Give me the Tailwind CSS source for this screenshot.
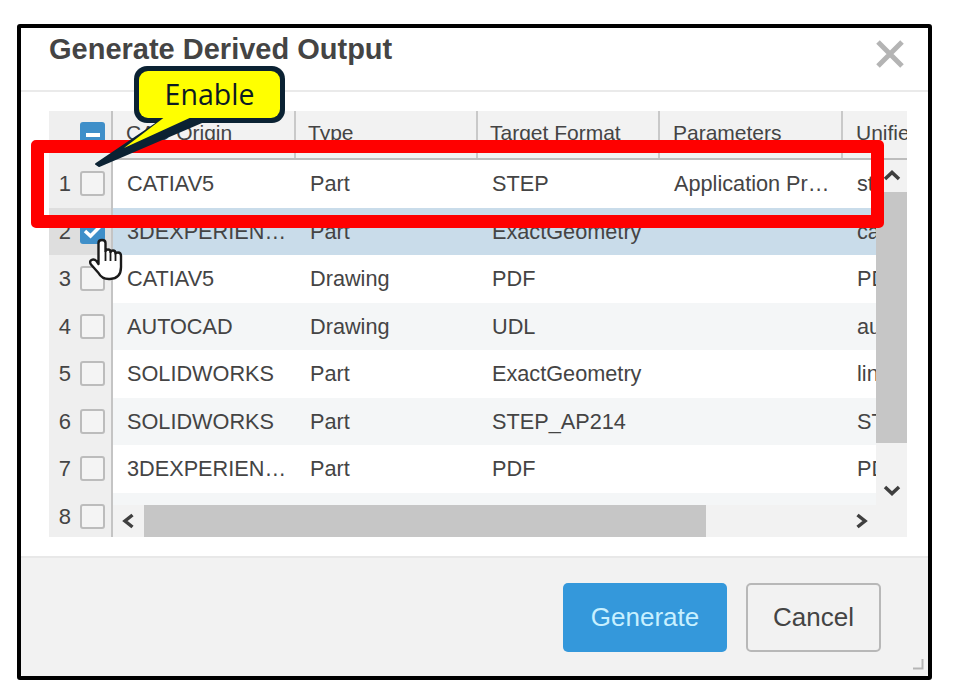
<!DOCTYPE html>
<html lang="en">

<head>
  <meta charset="UTF-8" />
  <title>Generate Derived Output</title>
  <script src="https://cdn.jsdelivr.net/npm/@tailwindcss/browser@4"></script>
</head>

<body class="bg-white font-['Liberation_Sans',Arial,sans-serif] text-[#444]">
  <div class="relative h-[695px] w-[960px] overflow-hidden pt-[24px] pl-[17px]">
    <!-- dialog -->
    <div class="flex h-[656px] w-[915px] flex-col rounded-[3px] border-4 border-black bg-white">
      <div class="relative h-[64px] shrink-0 border-b-2 border-[#eaeaea] pl-[28px] pt-[3px]">
        <h1 class="text-[29px] font-bold leading-[36px] text-[#444]">Generate Derived Output</h1>
        <svg class="absolute right-[23px] top-[11px]" width="30" height="30" viewBox="0 0 30 30">
          <path d="M3 3 L27 27 M27 3 L3 27" stroke="#b4b4b4" stroke-width="5" fill="none" />
        </svg>
      </div>

      <div class="h-[464px] shrink-0 pl-[28px] pr-[21px] pt-[19px]">
        <div class="flex h-[426px] overflow-hidden bg-[#f2f2f2]">
          <!-- row numbers and checkboxes -->
          <div class="h-full w-[64px] shrink-0 overflow-hidden border-r-2 border-[#c4c4c4] bg-[#efefef]">
            <div class="flex h-[49px] items-start pl-[31px] pt-[11px]">
              <div class="flex h-[26px] w-[25px] items-center justify-center rounded-[3px] bg-[#3f8fc9]">
                <div class="h-[4px] w-[14px] bg-white"></div>
              </div>
            </div>
            <div class="flex h-[47.5px] items-center justify-end gap-[9px] pr-[6px] text-[22px]"><span>1</span><span class="h-[25px] w-[25px] rounded-[3px] border-2 border-[#bcbcbc] bg-[#f4f4f4]"></span></div>
            <div class="flex h-[47.5px] items-center justify-end gap-[9px] bg-[#dedede] pr-[6px] text-[22px]"><span>2</span>
              <span class="flex h-[25px] w-[25px] items-center justify-center rounded-[3px] bg-[#3f8fc9]">
                <svg width="19" height="15" viewBox="0 0 19 15"><path d="M2 7 L7.5 12 L17 2.5" stroke="#fff" stroke-width="3.5" fill="none" /></svg>
              </span>
            </div>
            <div class="flex h-[47.5px] items-center justify-end gap-[9px] pr-[6px] text-[22px]"><span>3</span><span class="h-[25px] w-[25px] rounded-[3px] border-2 border-[#bcbcbc] bg-[#f4f4f4]"></span></div>
            <div class="flex h-[47.5px] items-center justify-end gap-[9px] pr-[6px] text-[22px]"><span>4</span><span class="h-[25px] w-[25px] rounded-[3px] border-2 border-[#bcbcbc] bg-[#f4f4f4]"></span></div>
            <div class="flex h-[47.5px] items-center justify-end gap-[9px] pr-[6px] text-[22px]"><span>5</span><span class="h-[25px] w-[25px] rounded-[3px] border-2 border-[#bcbcbc] bg-[#f4f4f4]"></span></div>
            <div class="flex h-[47.5px] items-center justify-end gap-[9px] pr-[6px] text-[22px]"><span>6</span><span class="h-[25px] w-[25px] rounded-[3px] border-2 border-[#bcbcbc] bg-[#f4f4f4]"></span></div>
            <div class="flex h-[47.5px] items-center justify-end gap-[9px] pr-[6px] text-[22px]"><span>7</span><span class="h-[25px] w-[25px] rounded-[3px] border-2 border-[#bcbcbc] bg-[#f4f4f4]"></span></div>
            <div class="flex h-[47.5px] items-center justify-end gap-[9px] pr-[6px] text-[22px]"><span>8</span><span class="h-[25px] w-[25px] rounded-[3px] border-2 border-[#bcbcbc] bg-[#f4f4f4]"></span></div>
          </div>

          <div class="flex min-w-0 flex-1 flex-col">
            <!-- header -->
            <div class="grid h-[49px] shrink-0 grid-cols-[183px_182px_182px_183px_1fr] overflow-hidden border-b-2 border-[#bdbdbd] text-[21px] leading-[44px]">
              <div class="border-r-2 border-[#c9c9c9] pl-[13px]">CAD Origin</div>
              <div class="border-r-2 border-[#c9c9c9] pl-[12px]">Type</div>
              <div class="border-r-2 border-[#c9c9c9] pl-[12px]">Target Format</div>
              <div class="border-r-2 border-[#c9c9c9] pl-[13px]">Parameters</div>
              <div class="whitespace-nowrap pl-[13px]">Unified</div>
            </div>

            <div class="flex min-h-0 flex-1">
              <!-- rows -->
              <div class="min-w-0 flex-1 overflow-hidden bg-[#f4f6f7] text-[21.7px] leading-[47.5px]">
                <div class="grid h-[47.5px] grid-cols-[182px_182px_182px_183px_100px] whitespace-nowrap bg-white">
                  <div class="pl-[14px]">CATIAV5</div><div class="pl-[15px]">Part</div><div class="pl-[15px]">STEP</div><div class="pl-[15px]">Application Pr…</div><div class="pl-[15px]">step</div>
                </div>
                <div class="grid h-[47.5px] grid-cols-[182px_182px_182px_183px_100px] whitespace-nowrap bg-[#c9dcea]">
                  <div class="pl-[14px]">3DEXPERIEN…</div><div class="pl-[15px]">Part</div><div class="pl-[15px]">ExactGeometry</div><div class="pl-[15px]"></div><div class="pl-[15px]">catia</div>
                </div>
                <div class="grid h-[47.5px] grid-cols-[182px_182px_182px_183px_100px] whitespace-nowrap bg-white">
                  <div class="pl-[14px]">CATIAV5</div><div class="pl-[15px]">Drawing</div><div class="pl-[15px]">PDF</div><div class="pl-[15px]"></div><div class="pl-[15px]">PDF</div>
                </div>
                <div class="grid h-[47.5px] grid-cols-[182px_182px_182px_183px_100px] whitespace-nowrap bg-[#f4f6f7]">
                  <div class="pl-[14px]">AUTOCAD</div><div class="pl-[15px]">Drawing</div><div class="pl-[15px]">UDL</div><div class="pl-[15px]"></div><div class="pl-[15px]">autocad</div>
                </div>
                <div class="grid h-[47.5px] grid-cols-[182px_182px_182px_183px_100px] whitespace-nowrap bg-white">
                  <div class="pl-[14px]">SOLIDWORKS</div><div class="pl-[15px]">Part</div><div class="pl-[15px]">ExactGeometry</div><div class="pl-[15px]"></div><div class="pl-[15px]">link</div>
                </div>
                <div class="grid h-[47.5px] grid-cols-[182px_182px_182px_183px_100px] whitespace-nowrap bg-[#f4f6f7]">
                  <div class="pl-[14px]">SOLIDWORKS</div><div class="pl-[15px]">Part</div><div class="pl-[15px]">STEP_AP214</div><div class="pl-[15px]"></div><div class="pl-[15px]">STEP</div>
                </div>
                <div class="grid h-[47.5px] grid-cols-[182px_182px_182px_183px_100px] whitespace-nowrap bg-white">
                  <div class="pl-[14px]">3DEXPERIEN…</div><div class="pl-[15px]">Part</div><div class="pl-[15px]">PDF</div><div class="pl-[15px]"></div><div class="pl-[15px]">PDF</div>
                </div>
              </div>

              <!-- vertical scrollbar -->
              <div class="flex w-[31px] shrink-0 flex-col">
                <div class="flex h-[32px] items-start justify-center pt-[10px]">
                  <svg width="18" height="11" viewBox="0 0 18 11"><path d="M2 9 L9 2.5 L16 9" stroke="#3f3f3f" stroke-width="3.5" fill="none" /></svg>
                </div>
                <div class="h-[251px] bg-[#c6c6c6]"></div>
                <div class="flex flex-1 items-end justify-center pb-[9px]">
                  <svg width="18" height="11" viewBox="0 0 18 11"><path d="M2 2 L9 8.5 L16 2" stroke="#3f3f3f" stroke-width="3.5" fill="none" /></svg>
                </div>
              </div>
            </div>

            <!-- horizontal scrollbar -->
            <div class="flex h-[32px] shrink-0 items-stretch">
              <div class="flex w-[31px] items-center justify-center">
                <svg width="13" height="16" viewBox="0 0 13 16"><path d="M10.5 2 L3 8 L10.5 14" stroke="#3f3f3f" stroke-width="3.5" fill="none" /></svg>
              </div>
              <div class="w-[562px] bg-[#c6c6c6]"></div>
              <div class="flex flex-1 items-center justify-end pr-[39px]">
                <svg width="13" height="16" viewBox="0 0 13 16"><path d="M2.5 2 L10 8 L2.5 14" stroke="#3f3f3f" stroke-width="3.5" fill="none" /></svg>
              </div>
            </div>
          </div>
        </div>
      </div>

      <!-- footer -->
      <div class="relative flex flex-1 items-start justify-end gap-[19px] rounded-b-[3px] border-t-2 border-[#e8e8e8] bg-[#f2f2f2] pr-[47px] pt-[25px]">
        <button type="button" class="h-[69px] w-[164px] rounded-[5px] bg-[#3498db] text-[26px] text-[#c8f0ff]">Generate</button>
        <button type="button" class="h-[69px] w-[135px] rounded-[5px] border-2 border-[#b8b8b8] text-[26px] text-[#444]">Cancel</button>
        <svg class="absolute bottom-[6px] right-[4px]" width="12" height="12" viewBox="0 0 12 12">
          <path d="M1 10.5 H10.5 V1" stroke="#b5b5b5" stroke-width="2" fill="none" />
        </svg>
      </div>
    </div>

    <!-- red highlight over row 1 -->
    <div class="absolute left-[31px] top-[140px] h-[88px] w-[853px] rounded-[5px] border-[13px] border-[#ff0000]"></div>

    <!-- Enable callout -->
    <svg class="absolute left-0 top-0" width="300" height="180" viewBox="0 0 300 180">
      <rect x="134" y="66" width="151" height="57" rx="13" fill="#0b2233" />
      <path d="M160 121 L96 164 L99 166 L204 121 Z" fill="#0b2233" stroke="#0b2233" stroke-width="2" stroke-linejoin="round" />
      <rect x="139" y="71" width="141" height="47" rx="9" fill="#ffff00" />
      <path d="M166 116 L124 148 L194 116 Z" fill="#ffff00" />
    </svg>
    <div class="absolute left-[134px] top-[66px] flex h-[57px] w-[151px] items-center justify-center font-['Open_Sans',sans-serif] text-[28.5px] text-[#0b1a24]">Enable</div>

    <!-- hand cursor -->
    <svg class="absolute left-[89px] top-[237px]" width="34" height="44" viewBox="0 0 34 44">
      <path d="M9.5 6 Q9.5 3 13 3 Q16.5 3 16.5 6 V14 Q17 12.5 19 12.5 Q21.5 12.5 21.5 15 Q22 13.5 24 13.5 Q26.5 13.5 26.5 16.5 Q27 15.5 29 15.5 Q32 15.5 32 19 V30 Q32 41.5 21 42 Q13 42.5 9.5 36 L2 27.5 Q0 24.5 2.5 23 Q5 21.5 7.5 24 L9.5 27 Z" fill="#fff" stroke="#1a1a1a" stroke-width="2.4" stroke-linejoin="round" />
      <path d="M16.5 14 V24 M21.5 15 V24 M26.5 16.5 V24" stroke="#1a1a1a" stroke-width="1.8" fill="none" />
    </svg>
  </div>
</body>

</html>
